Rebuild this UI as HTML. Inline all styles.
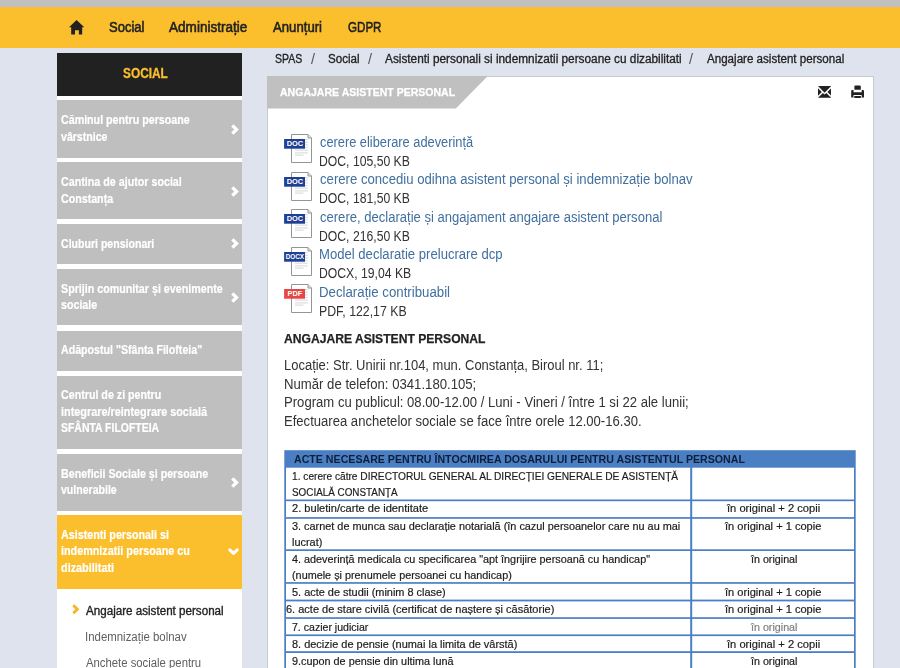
<!DOCTYPE html>
<html lang="ro"><head><meta charset="utf-8"><title>Angajare asistent personal</title>
<style>
*{box-sizing:border-box;margin:0;padding:0}
html,body{width:900px;height:668px;overflow:hidden}
body{background:#dfe3ee;font-family:"Liberation Sans",sans-serif;position:relative}
.b{position:absolute;display:block}
.mi{left:57px;width:185.3px;background:#bfbfbf}
.ar{left:231.1px;width:8.6px;height:11px}
.fi{left:284px;width:30px;height:31px}
.c{background:#fff}
.g{position:absolute;left:0;top:0;width:900px;height:668px;will-change:transform}
.x{position:absolute;display:block;white-space:nowrap;transform-origin:0 0}
.bt{font-family:"Liberation Sans",sans-serif;font-weight:bold;font-size:7.4px;fill:#fff;text-anchor:middle}
</style></head><body>
<div class="b" style="left:0;top:0;width:900px;height:7px;background:#c0c0c0"></div>
<div class="b" style="left:0;top:7px;width:900px;height:41px;background:#fbbf2d"></div>
<svg class="b" style="left:69px;top:20.3px;width:15.2px;height:14.6px" viewBox="0 0 15.2 14.6"><path d="M7.6 0 L15.2 7.2 H13.2 V14.6 H9.9 V10.2 H6 V14.6 H2.2 V7.2 H0 Z" fill="#212121"/></svg>

<!-- sidebar -->
<div class="b" style="left:57px;top:95px;width:185.3px;height:580px;background:#fff"></div>
<div class="b" style="left:57px;top:53px;width:185.3px;height:42.6px;background:#212121"></div>
<div class="b mi" style="top:100px;height:57.5px"></div>
<div class="b mi" style="top:162.2px;height:56.8px"></div>
<div class="b mi" style="top:224px;height:39.7px"></div>
<div class="b mi" style="top:268.9px;height:56.6px"></div>
<div class="b mi" style="top:330.6px;height:40.3px"></div>
<div class="b mi" style="top:376px;height:73px"></div>
<div class="b mi" style="top:453.9px;height:56.7px"></div>
<div class="b mi" style="top:515.2px;height:73.5px;background:#fbbf2d"></div>
<svg class="b ar" style="top:124.2px" viewBox="0 0 8.6 11"><use href="#ar"/></svg>
<svg class="b ar" style="top:185.6px" viewBox="0 0 8.6 11"><use href="#ar"/></svg>
<svg class="b ar" style="top:238.4px" viewBox="0 0 8.6 11"><use href="#ar"/></svg>
<svg class="b ar" style="top:292.2px" viewBox="0 0 8.6 11"><use href="#ar"/></svg>
<svg class="b ar" style="top:477.2px" viewBox="0 0 8.6 11"><use href="#ar"/></svg>
<svg class="b" style="left:228.1px;top:548.2px;width:11px;height:8px" viewBox="0 0 11 8"><path d="M1.8 1.8 L5.5 5.3 L9.2 1.8" fill="none" stroke="#fff" stroke-width="3" stroke-linecap="round" stroke-linejoin="round"/></svg>
<svg class="b" style="left:72px;top:604px;width:8px;height:10.6px" viewBox="0 0 8 10.6"><path d="M1.3 1.3 L5.3 5.3 L1.3 9.3" fill="none" stroke="#f5b62a" stroke-width="3"/></svg>

<!-- content panel -->
<div class="b" style="left:267px;top:75.5px;width:607px;height:600px;background:#fff;border:1px solid #c6cad2"></div>
<svg class="b" style="left:267px;top:76px;width:222px;height:34px" viewBox="0 0 222 34"><path d="M0 0 H220.8 L188.8 32.6 H0 Z" fill="#c0c0c0"/></svg>
<svg class="b" style="left:818.1px;top:86px;width:13.2px;height:11.8px" viewBox="0 0 13.2 11.8"><path d="M0 0 H13.2 L6.6 6.7 Z M0 2.2 L3.8 6 L0 9.8 Z M13.2 2.2 L9.4 6 L13.2 9.8 Z M0 11.8 L4.9 6.9 L6.6 8.6 L8.3 6.9 L13.2 11.8 Z" fill="#212121"/></svg>
<svg class="b" style="left:851.1px;top:84.9px;width:13px;height:13.4px" viewBox="0 0 13 13.4"><path d="M3.4 4.7 V1.4 Q3.4 0.4 4.4 0.4 H8.8 Q9.8 0.4 9.8 1.4 V4.7 Z M0.2 12.6 V5.9 Q0.2 4.9 1.2 4.9 H2.5 V7.2 H10.7 V4.9 H12 Q13 4.9 13 5.9 V12.6 H10.7 V9.9 H2.5 V12.6 Z M3.3 11 H9.9 V13.5 H3.3 Z" fill="#212121"/></svg>

<!-- file icons -->
<svg class="b fi" style="top:133.1px" viewBox="0 0 30 31"><use href="#pg"/><rect x="0.1" y="6" width="20.9" height="9.7" fill="#1f3f94"/><text x="10.9" y="13" class="bt">DOC</text></svg>
<svg class="b fi" style="top:170.6px" viewBox="0 0 30 31"><use href="#pg"/><rect x="0.1" y="6" width="20.9" height="9.7" fill="#1f3f94"/><text x="10.9" y="13" class="bt">DOC</text></svg>
<svg class="b fi" style="top:208.1px" viewBox="0 0 30 31"><use href="#pg"/><rect x="0.1" y="6" width="20.9" height="9.7" fill="#1f3f94"/><text x="10.9" y="13" class="bt">DOC</text></svg>
<svg class="b fi" style="top:245.6px" viewBox="0 0 30 31"><use href="#pg"/><rect x="0.1" y="6" width="20.9" height="9.7" fill="#1f3f94"/><text x="10.9" y="12.8" class="bt" style="font-size:6.4px">DOCX</text></svg>
<svg class="b fi" style="top:283.1px" viewBox="0 0 30 31"><use href="#pg"/><rect x="0.1" y="6" width="20.9" height="9.7" fill="#e84545"/><text x="10.9" y="13" class="bt">PDF</text></svg>

<!-- table grid -->
<svg class="b" style="left:284px;top:450px;width:573px;height:218px" viewBox="0 0 573 218">
<rect x="0.3" y="0.2" width="571.4" height="218" fill="#4a7fc3"/>
<rect x="2.0" y="17.7" width="404.2" height="31.8" fill="#fff"/><rect x="408.2" y="17.7" width="161.8" height="31.8" fill="#fff"/>
<rect x="2.0" y="51.2" width="404.2" height="15.9" fill="#fff"/><rect x="408.2" y="51.2" width="161.8" height="15.9" fill="#fff"/>
<rect x="2.0" y="68.8" width="404.2" height="30.5" fill="#fff"/><rect x="408.2" y="68.8" width="161.8" height="30.5" fill="#fff"/>
<rect x="2.0" y="101.0" width="404.2" height="31.1" fill="#fff"/><rect x="408.2" y="101.0" width="161.8" height="31.1" fill="#fff"/>
<rect x="2.0" y="133.8" width="404.2" height="15.8" fill="#fff"/><rect x="408.2" y="133.8" width="161.8" height="15.8" fill="#fff"/>
<rect x="2.0" y="151.4" width="404.2" height="15.8" fill="#fff"/><rect x="408.2" y="151.4" width="161.8" height="15.8" fill="#fff"/>
<rect x="2.0" y="168.9" width="404.2" height="15.5" fill="#fff"/><rect x="408.2" y="168.9" width="161.8" height="15.5" fill="#fff"/>
<rect x="2.0" y="186.1" width="404.2" height="15.1" fill="#fff"/><rect x="408.2" y="186.1" width="161.8" height="15.1" fill="#fff"/>
<rect x="2.0" y="203.0" width="404.2" height="15.0" fill="#fff"/><rect x="408.2" y="203.0" width="161.8" height="15.0" fill="#fff"/>
</svg>

<svg width="0" height="0" style="position:absolute"><defs>
<path id="ar" d="M1.35 1.3 L5.55 5.5 L1.35 9.7" fill="none" stroke="#fff" stroke-width="3.3"/>
<g id="pg">
<path d="M7.5 1.5 H24 L27.5 5 V29.5 H7.5 Z" fill="#fff" stroke="#959595" stroke-width="1"/>
<path d="M24 1.5 V5 H27.5" fill="#e4e4e4" stroke="#959595" stroke-width="1"/>
<path d="M11 6.7 H23.8 M11 9.3 H23.8 M11 11.9 H23.8 M11 14.5 H23.8 M11 17.2 H23.8 M11 19.8 H23.8 M11 22.2 H19.5" stroke="#dedede" stroke-width="1.2"/>
</g></defs></svg>

<div class="g">
<span class="x" style="left:108.50px;top:18.60px;font-size:14px;line-height:16px;color:#222;transform:scaleX(0.9311);-webkit-text-stroke:0.55px #222">Social</span>
<span class="x" style="left:169.30px;top:18.60px;font-size:14px;line-height:16px;color:#222;transform:scaleX(0.9688);-webkit-text-stroke:0.55px #222">Administrație</span>
<span class="x" style="left:273.30px;top:18.60px;font-size:14px;line-height:16px;color:#222;transform:scaleX(0.9398);-webkit-text-stroke:0.55px #222">Anunțuri</span>
<span class="x" style="left:348.40px;top:18.60px;font-size:14px;line-height:16px;color:#222;transform:scaleX(0.8280);-webkit-text-stroke:0.55px #222">GDPR</span>
<span class="x" style="left:122.80px;top:65.10px;font-size:14px;line-height:16px;color:#fbbf2d;transform:scaleX(0.8474);font-weight:bold;-webkit-text-stroke:0.3px #fbbf2d">SOCIAL</span>
<span class="x" style="left:60.70px;top:113.40px;font-size:12px;line-height:14px;color:#fff;transform:scaleX(0.8895);font-weight:bold;-webkit-text-stroke:0.2px #fff">Căminul pentru persoane</span>
<span class="x" style="left:60.70px;top:129.90px;font-size:12px;line-height:14px;color:#fff;transform:scaleX(0.8807);font-weight:bold;-webkit-text-stroke:0.2px #fff">vârstnice</span>
<span class="x" style="left:60.70px;top:175.00px;font-size:12px;line-height:14px;color:#fff;transform:scaleX(0.8924);font-weight:bold;-webkit-text-stroke:0.2px #fff">Cantina de ajutor social</span>
<span class="x" style="left:60.70px;top:191.50px;font-size:12px;line-height:14px;color:#fff;transform:scaleX(0.8882);font-weight:bold;-webkit-text-stroke:0.2px #fff">Constanța</span>
<span class="x" style="left:60.70px;top:236.80px;font-size:12px;line-height:14px;color:#fff;transform:scaleX(0.8801);font-weight:bold;-webkit-text-stroke:0.2px #fff">Cluburi pensionari</span>
<span class="x" style="left:60.70px;top:281.80px;font-size:12px;line-height:14px;color:#fff;transform:scaleX(0.8915);font-weight:bold;-webkit-text-stroke:0.2px #fff">Sprijin comunitar și evenimente</span>
<span class="x" style="left:60.70px;top:298.30px;font-size:12px;line-height:14px;color:#fff;transform:scaleX(0.8898);font-weight:bold;-webkit-text-stroke:0.2px #fff">sociale</span>
<span class="x" style="left:60.70px;top:343.00px;font-size:12px;line-height:14px;color:#fff;transform:scaleX(0.8860);font-weight:bold;-webkit-text-stroke:0.2px #fff">Adăpostul "Sfânta Filofteia"</span>
<span class="x" style="left:60.70px;top:388.40px;font-size:12px;line-height:14px;color:#fff;transform:scaleX(0.8902);font-weight:bold;-webkit-text-stroke:0.2px #fff">Centrul de zi pentru</span>
<span class="x" style="left:60.70px;top:404.90px;font-size:12px;line-height:14px;color:#fff;transform:scaleX(0.9046);font-weight:bold;-webkit-text-stroke:0.2px #fff">integrare/reintegrare socială</span>
<span class="x" style="left:60.70px;top:421.40px;font-size:12px;line-height:14px;color:#fff;transform:scaleX(0.8710);font-weight:bold;-webkit-text-stroke:0.2px #fff">SFÂNTA FILOFTEIA</span>
<span class="x" style="left:60.70px;top:466.60px;font-size:12px;line-height:14px;color:#fff;transform:scaleX(0.8894);font-weight:bold;-webkit-text-stroke:0.2px #fff">Beneficii Sociale și persoane</span>
<span class="x" style="left:60.70px;top:483.10px;font-size:12px;line-height:14px;color:#fff;transform:scaleX(0.8793);font-weight:bold;-webkit-text-stroke:0.2px #fff">vulnerabile</span>
<span class="x" style="left:60.70px;top:527.90px;font-size:12px;line-height:14px;color:#fff;transform:scaleX(0.8947);font-weight:bold;-webkit-text-stroke:0.2px #fff">Asistenti personali si</span>
<span class="x" style="left:60.70px;top:544.40px;font-size:12px;line-height:14px;color:#fff;transform:scaleX(0.8991);font-weight:bold;-webkit-text-stroke:0.2px #fff">indemnizatii persoane cu</span>
<span class="x" style="left:60.70px;top:560.90px;font-size:12px;line-height:14px;color:#fff;transform:scaleX(0.9051);font-weight:bold;-webkit-text-stroke:0.2px #fff">dizabilitati</span>
<span class="x" style="left:86.20px;top:603.90px;font-size:12px;line-height:14px;color:#222;transform:scaleX(0.9687);-webkit-text-stroke:0.35px #222">Angajare asistent personal</span>
<span class="x" style="left:85.25px;top:629.90px;font-size:12px;line-height:14px;color:#606060;transform:scaleX(0.9524)">Indemnizație bolnav</span>
<span class="x" style="left:86.20px;top:656.00px;font-size:12px;line-height:14px;color:#606060;transform:scaleX(0.9431)">Anchete sociale pentru</span>
<span class="x" style="left:275.00px;top:52.30px;font-size:12px;line-height:14px;color:#222;transform:scaleX(0.8772);-webkit-text-stroke:0.3px #222">SPAS</span>
<span class="x" style="left:311.20px;top:49.90px;font-size:15px;line-height:17px;color:#555;transform:scaleX(0.9600)">/</span>
<span class="x" style="left:328.30px;top:52.30px;font-size:12px;line-height:14px;color:#222;transform:scaleX(0.9682);-webkit-text-stroke:0.3px #222">Social</span>
<span class="x" style="left:367.50px;top:49.90px;font-size:15px;line-height:17px;color:#555;transform:scaleX(0.9600)">/</span>
<span class="x" style="left:385.00px;top:52.30px;font-size:12px;line-height:14px;color:#222;transform:scaleX(0.9840);-webkit-text-stroke:0.3px #222">Asistenti personali si indemnizatii persoane cu dizabilitati</span>
<span class="x" style="left:689.20px;top:49.90px;font-size:15px;line-height:17px;color:#555;transform:scaleX(0.9600)">/</span>
<span class="x" style="left:706.70px;top:52.30px;font-size:12px;line-height:14px;color:#222;transform:scaleX(0.9659);-webkit-text-stroke:0.3px #222">Angajare asistent personal</span>
<span class="x" style="left:280.00px;top:86.40px;font-size:11px;line-height:12px;color:#fff;transform:scaleX(0.9573);font-weight:bold;-webkit-text-stroke:0.25px #fff">ANGAJARE ASISTENT PERSONAL</span>
<span class="x" style="left:319.90px;top:134.00px;font-size:14px;line-height:16px;color:#41709f;transform:scaleX(0.9151)">cerere eliberare adeverință</span>
<span class="x" style="left:319.03px;top:152.70px;font-size:14px;line-height:16px;color:#333;transform:scaleX(0.8714)">DOC, 105,50 KB</span>
<span class="x" style="left:319.90px;top:171.47px;font-size:14px;line-height:16px;color:#41709f;transform:scaleX(0.9388)">cerere concediu odihna asistent personal și indemnizație bolnav</span>
<span class="x" style="left:319.03px;top:190.15px;font-size:14px;line-height:16px;color:#333;transform:scaleX(0.8714)">DOC, 181,50 KB</span>
<span class="x" style="left:319.90px;top:208.94px;font-size:14px;line-height:16px;color:#41709f;transform:scaleX(0.9319)">cerere, declarație și angajament angajare asistent personal</span>
<span class="x" style="left:319.03px;top:227.60px;font-size:14px;line-height:16px;color:#333;transform:scaleX(0.8714)">DOC, 216,50 KB</span>
<span class="x" style="left:318.96px;top:246.41px;font-size:14px;line-height:16px;color:#41709f;transform:scaleX(0.9359)">Model declaratie prelucrare dcp</span>
<span class="x" style="left:319.03px;top:265.05px;font-size:14px;line-height:16px;color:#333;transform:scaleX(0.8709)">DOCX, 19,04 KB</span>
<span class="x" style="left:318.95px;top:283.88px;font-size:14px;line-height:16px;color:#41709f;transform:scaleX(0.9461)">Declarație contribuabil</span>
<span class="x" style="left:319.02px;top:302.50px;font-size:14px;line-height:16px;color:#333;transform:scaleX(0.8802)">PDF, 122,17 KB</span>
<span class="x" style="left:284.40px;top:330.70px;font-size:13px;line-height:15px;color:#222;transform:scaleX(0.9320);font-weight:bold;-webkit-text-stroke:0.25px #222">ANGAJARE ASISTENT PERSONAL</span>
<span class="x" style="left:283.77px;top:357.00px;font-size:14px;line-height:16px;color:#333;transform:scaleX(0.9268)">Locație: Str. Unirii nr.104, mun. Constanța, Biroul nr. 11;</span>
<span class="x" style="left:283.76px;top:375.80px;font-size:14px;line-height:16px;color:#333;transform:scaleX(0.9393)">Număr de telefon: 0341.180.105;</span>
<span class="x" style="left:283.76px;top:394.30px;font-size:14px;line-height:16px;color:#333;transform:scaleX(0.9360)">Program cu publicul: 08.00-12.00 / Luni - Vineri / între 1 si 22 ale lunii;</span>
<span class="x" style="left:283.77px;top:413.20px;font-size:14px;line-height:16px;color:#333;transform:scaleX(0.9338)">Efectuarea anchetelor sociale se face între orele 12.00-16.30.</span>
</div>
<span class="x tt" style="left:293.80px;top:452.60px;font-size:11px;line-height:12px;color:#0f1e38;transform:scaleX(0.9658);font-weight:bold">ACTE NECESARE PENTRU ÎNTOCMIREA DOSARULUI PENTRU ASISTENTUL PERSONAL</span>
<span class="x tt" style="left:292.30px;top:471.45px;font-size:10px;line-height:11px;color:#1c1c1c;transform:scaleX(1.0163);-webkit-text-stroke:0.18px #1c1c1c">1. cerere către DIRECTORUL GENERAL AL DIRECȚIEI GENERALE DE ASISTENȚĂ</span>
<span class="x tt" style="left:292.30px;top:486.75px;font-size:10px;line-height:11px;color:#1c1c1c;transform:scaleX(0.9871);-webkit-text-stroke:0.18px #1c1c1c">SOCIALĂ CONSTANȚA</span>
<span class="x tt" style="left:292.30px;top:503.25px;font-size:10px;line-height:11px;color:#1c1c1c;transform:scaleX(1.1087);-webkit-text-stroke:0.18px #1c1c1c">2. buletin/carte de identitate</span>
<span class="x tt" style="left:292.30px;top:520.75px;font-size:10px;line-height:11px;color:#1c1c1c;transform:scaleX(1.0879);-webkit-text-stroke:0.18px #1c1c1c">3. carnet de munca sau declarație notarială (în cazul persoanelor care nu au mai</span>
<span class="x tt" style="left:292.30px;top:536.75px;font-size:10px;line-height:11px;color:#1c1c1c;transform:scaleX(1.0928);-webkit-text-stroke:0.18px #1c1c1c">lucrat)</span>
<span class="x tt" style="left:292.30px;top:554.15px;font-size:10px;line-height:11px;color:#1c1c1c;transform:scaleX(1.0828);-webkit-text-stroke:0.18px #1c1c1c">4. adeverință medicala cu specificarea "apt îngrijire persoană cu handicap"</span>
<span class="x tt" style="left:292.30px;top:569.75px;font-size:10px;line-height:11px;color:#1c1c1c;transform:scaleX(1.0831);-webkit-text-stroke:0.18px #1c1c1c">(numele și prenumele persoanei cu handicap)</span>
<span class="x tt" style="left:292.30px;top:586.75px;font-size:10px;line-height:11px;color:#1c1c1c;transform:scaleX(1.0935);-webkit-text-stroke:0.18px #1c1c1c">5. acte de studii (minim 8 clase)</span>
<span class="x tt" style="left:286.00px;top:604.45px;font-size:10px;line-height:11px;color:#1c1c1c;transform:scaleX(1.0999);-webkit-text-stroke:0.18px #1c1c1c">6. acte de stare civilă (certificat de naștere și căsătorie)</span>
<span class="x tt" style="left:292.30px;top:621.75px;font-size:10px;line-height:11px;color:#1c1c1c;transform:scaleX(1.0559);-webkit-text-stroke:0.18px #1c1c1c">7. cazier judiciar</span>
<span class="x tt" style="left:292.30px;top:638.75px;font-size:10px;line-height:11px;color:#1c1c1c;transform:scaleX(1.0958);-webkit-text-stroke:0.18px #1c1c1c">8. decizie de pensie (numai la limita de vârstă)</span>
<span class="x tt" style="left:292.30px;top:655.95px;font-size:10px;line-height:11px;color:#1c1c1c;transform:scaleX(1.0841);-webkit-text-stroke:0.18px #1c1c1c">9.cupon de pensie din ultima lună</span>
<span class="x tt" style="left:727.41px;top:503.25px;font-size:10px;line-height:11px;color:#1c1c1c;transform:scaleX(1.1132);-webkit-text-stroke:0.18px #1c1c1c">în original + 2 copii</span>
<span class="x tt" style="left:725.41px;top:520.75px;font-size:10px;line-height:11px;color:#1c1c1c;transform:scaleX(1.1081);-webkit-text-stroke:0.18px #1c1c1c">în original + 1 copie</span>
<span class="x tt" style="left:750.72px;top:554.15px;font-size:10px;line-height:11px;color:#1c1c1c;transform:scaleX(1.0716);-webkit-text-stroke:0.18px #1c1c1c">în original</span>
<span class="x tt" style="left:725.41px;top:586.75px;font-size:10px;line-height:11px;color:#1c1c1c;transform:scaleX(1.1081);-webkit-text-stroke:0.18px #1c1c1c">în original + 1 copie</span>
<span class="x tt" style="left:725.41px;top:604.45px;font-size:10px;line-height:11px;color:#1c1c1c;transform:scaleX(1.1081);-webkit-text-stroke:0.18px #1c1c1c">în original + 1 copie</span>
<span class="x tt" style="left:750.72px;top:621.75px;font-size:10px;line-height:11px;color:#808080;transform:scaleX(1.0716);-webkit-text-stroke:0.18px #808080">în original</span>
<span class="x tt" style="left:727.41px;top:638.75px;font-size:10px;line-height:11px;color:#1c1c1c;transform:scaleX(1.1132);-webkit-text-stroke:0.18px #1c1c1c">în original + 2 copii</span>
<span class="x tt" style="left:750.72px;top:655.95px;font-size:10px;line-height:11px;color:#1c1c1c;transform:scaleX(1.0716);-webkit-text-stroke:0.18px #1c1c1c">în original</span>
</body></html>
